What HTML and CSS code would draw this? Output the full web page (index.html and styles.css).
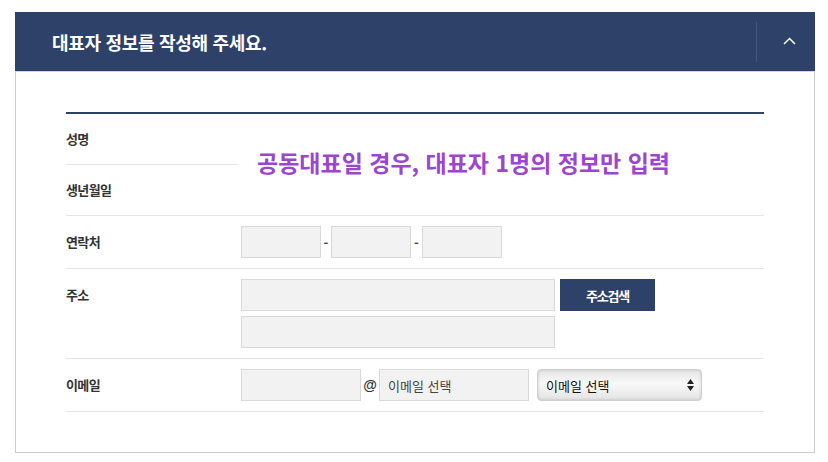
FILE: index.html
```html
<!DOCTYPE html>
<html lang="ko">
<head>
  <meta charset="UTF-8">
  <meta name="viewport" content="width=device-width, initial-scale=1.0">
  <title>대표자 정보</title>
  <link rel="stylesheet" href="styles.css">
</head>
<body>
  <div class="panel">
    <div class="panel-head">
      <h2 class="panel-title">대표자 정보를 작성해 주세요.</h2>
      <button class="toggle" type="button">
        <svg width="13" height="8" viewBox="0 0 13 8"><polyline points="1,7 6.5,1.5 12,7" fill="none" stroke="#fff" stroke-width="1.5"/></svg>
      </button>
    </div>

    <div class="panel-body">
      <div class="form">
        <div class="label short">성명</div>
        <div class="notice">공동대표일 경우, 대표자 1명의 정보만 입력</div>
        <div class="label short">생년월일</div>

        <div class="label">연락처</div>
        <div class="field">
          <input type="text" class="inp w80">
          <span class="sep">-</span>
          <input type="text" class="inp w80">
          <span class="sep">-</span>
          <input type="text" class="inp w80">
        </div>

        <div class="label">주소</div>
        <div class="field stack">
          <div class="line">
            <input type="text" class="inp w314">
            <button type="button" class="btn-search">주소검색</button>
          </div>
          <div class="line">
            <input type="text" class="inp w314">
          </div>
        </div>

        <div class="label">이메일</div>
        <div class="field">
          <input type="text" class="inp w120">
          <span class="at">@</span>
          <input type="text" class="inp w150" placeholder="이메일 선택">
          <span class="select-wrap">
            <select class="sel">
              <option>이메일 선택</option>
              <option>naver.com</option>
              <option>gmail.com</option>
            </select>
            <svg class="sel-arrow" width="7" height="12" viewBox="0 0 7 12"><polygon points="3.5,0 7,5 0,5" fill="#222"/><polygon points="0,7 7,7 3.5,12" fill="#222"/></svg>
          </span>
        </div>
      </div>
    </div>
  </div>
</body>
</html>
```

FILE: styles.css
```css
body {
  margin: 0;
  background: #fff;
  font-family: "Noto Sans CJK KR", "Noto Sans", sans-serif;
  color: #333;
}

.panel {
  width: 800px;
  margin: 12px 0 0 15px;
  box-sizing: border-box;
}

.panel-head {
  display: flex;
  align-items: center;
  height: 59px;
  padding-left: 37px;
  background: #2e4169;
}

.panel-title {
  flex: 1;
  margin: 0;
  font-size: 18px;
  font-weight: 700;
  letter-spacing: -0.3px;
  color: #fff;
}

.toggle {
  display: flex;
  align-items: center;
  justify-content: center;
  width: 59px;
  height: 40px;
  padding: 0 0 2px 6px;
  border: none;
  border-left: 1px solid #45577c;
  background: transparent;
  cursor: pointer;
}

.panel-body {
  padding: 40px 50px;
  border: 1px solid #ccc;
  border-top-color: #d4d4d4;
}

.form {
  display: grid;
  grid-template-columns: 172px 1fr;
  border-top: 2px solid #2e4169;
}

.form > div {
  border-bottom: 1px solid #e5e5e5;
}

.label {
  padding: 10px 0;
  line-height: 32px;
  font-size: 13px;
  font-weight: 700;
  letter-spacing: -0.6px;
  color: #333;
}

.label.short {
  padding: 9px 0;
}

.notice {
  grid-row: span 2;
  display: flex;
  align-items: center;
  padding: 0 0 6px 19px;
  font-size: 23px;
  font-weight: 700;
  color: #9b45d0;
}

.field {
  display: flex;
  align-items: center;
  padding: 10px 0 10px 3px;
}

.field.stack {
  flex-direction: column;
  align-items: flex-start;
  gap: 5px;
}

.line {
  display: flex;
  gap: 5px;
}

.inp {
  height: 32px;
  padding: 0 8px;
  box-sizing: border-box;
  border: 1px solid #d9d9d9;
  background: #f2f2f2;
  font-family: inherit;
  font-size: 13px;
  color: #333;
  outline: none;
}

.inp::placeholder {
  color: #444;
}

.w80 { width: 80px; }
.w120 { width: 120px; }
.w150 { width: 150px; }
.w314 { width: 314px; }

.sep {
  width: 10px;
  text-align: center;
  font-size: 13px;
  font-weight: 700;
  color: #444;
}

.sep + .inp + .sep {
  width: 11px;
}

.at {
  width: 18px;
  text-align: center;
  font-family: "Liberation Sans", sans-serif;
  font-size: 14px;
  font-weight: 700;
  color: #333;
}

.btn-search {
  width: 95px;
  height: 32px;
  border: none;
  background: #2e4169;
  font-family: inherit;
  font-size: 13px;
  font-weight: 700;
  letter-spacing: -1.2px;
  color: #fff;
  cursor: pointer;
}

.select-wrap {
  position: relative;
  margin-left: 8px;
}

.sel {
  display: block;
  width: 165px;
  height: 32px;
  padding: 0 8px;
  border: 1px solid #d0d0d0;
  border-radius: 4px;
  background: linear-gradient(to bottom, #e6e6e6, #f8f8f8 45%, #e4e4e4);
  box-shadow: inset 0 0 3px rgba(0, 0, 0, 0.18);
  appearance: none;
  -webkit-appearance: none;
  font-family: inherit;
  font-size: 13px;
  color: #111;
  outline: none;
}

.sel-arrow {
  position: absolute;
  right: 8px;
  top: 10px;
  pointer-events: none;
}
```
